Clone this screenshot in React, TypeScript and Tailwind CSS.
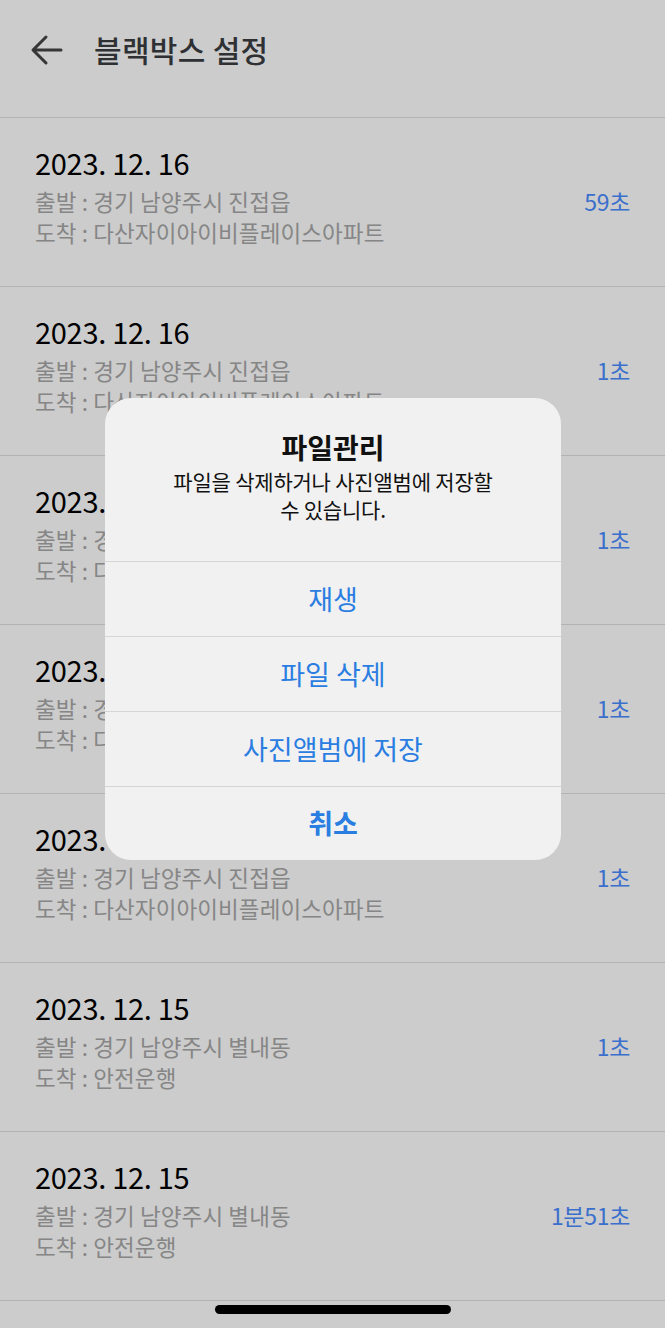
const ROWS = [
  { date: '2023. 12. 16', from: '경기 남양주시 진접읍', to: '다산자이아이비플레이스아파트', time: '59초' },
  { date: '2023. 12. 16', from: '경기 남양주시 진접읍', to: '다산자이아이비플레이스아파트', time: '1초' },
  { date: '2023. 12. 16', from: '경기 남양주시 진접읍', to: '다산자이아이비플레이스아파트', time: '1초' },
  { date: '2023. 12. 16', from: '경기 남양주시 진접읍', to: '다산자이아이비플레이스아파트', time: '1초' },
  { date: '2023. 12. 16', from: '경기 남양주시 진접읍', to: '다산자이아이비플레이스아파트', time: '1초' },
  { date: '2023. 12. 15', from: '경기 남양주시 별내동', to: '안전운행', time: '1초' },
  { date: '2023. 12. 15', from: '경기 남양주시 별내동', to: '안전운행', time: '1분51초' },
]

const ACTIONS = ['재생', '파일 삭제', '사진앨범에 저장']

export default function App() {
  return (
    <div className="relative w-[665px] h-[1328px] overflow-hidden bg-white font-['Noto_Sans_CJK_KR','Noto_Sans',sans-serif]">
      {/* Header */}
      <div className="flex items-center h-[118px] border-b border-[#e2e2e2] pb-[18px]">
        <svg width="34" height="34" viewBox="0 0 34 34" className="ml-[30px]" fill="none" stroke="#444" strokeWidth="3" strokeLinecap="round" strokeLinejoin="round">
          <path d="M31 17H4M16 4L3 17l13 13" />
        </svg>
        <span className="ml-[30px] text-[30px] text-[#3a3d42] font-medium tracking-[0.3px]">블랙박스 설정</span>
      </div>

      {/* List */}
      {ROWS.map((r, i) => (
        <div key={i} className="h-[169px] border-b border-[#e0e0e0] pl-[35px] pr-[35px] pt-[27px]">
          <div className="text-[29px] leading-[34px] text-black tracking-[-0.3px]">{r.date}</div>
          <div className="mt-[7px] flex justify-between">
            <div className="text-[22.5px] leading-[31px] text-[#a8a8a8] tracking-[0.1px]">
              <div>출발 : {r.from}</div>
              <div>도착 : {r.to}</div>
            </div>
            <div className="text-[23px] leading-[31px] text-[#4a8bff] tracking-[-0.3px]">{r.time}</div>
          </div>
        </div>
      ))}

      {/* Dim overlay */}
      <div className="absolute inset-0 bg-black/20" />

      {/* Home indicator */}
      <div className="absolute left-[215px] top-[1305px] w-[236px] h-[9px] rounded-full bg-black" />

      {/* Alert */}
      <div className="absolute left-[105px] top-[398px] w-[456px] rounded-[26px] bg-[#f1f1f1] overflow-hidden">
        <div className="h-[163px] flex flex-col items-center pt-[30px] px-[30px] text-center">
          <div className="text-[28px] leading-[38px] font-bold text-[#111]">파일관리</div>
          <div className="mt-[1px] text-[21px] leading-[28px] text-[#111] tracking-[-0.2px]">
            파일을 삭제하거나 사진앨범에 저장할
            <br />수 있습니다.
          </div>
        </div>
        {ACTIONS.map((a) => (
          <div key={a} className="h-[75px] border-t border-[#d6d6d6] flex items-center justify-center text-[27px] text-[#2a7de1]">
            {a}
          </div>
        ))}
        <div className="h-[74px] border-t border-[#d6d6d6] flex items-center justify-center text-[27px] font-bold text-[#2a7de1]">
          취소
        </div>
      </div>
    </div>
  )
}
